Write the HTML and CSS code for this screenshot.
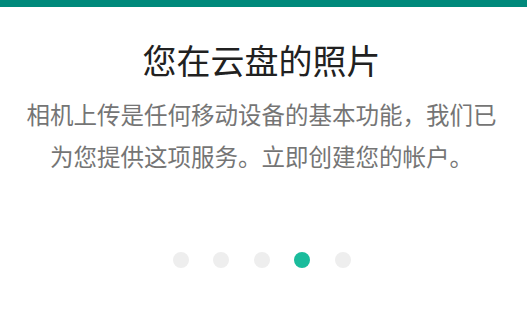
FILE: index.html
```html
<!DOCTYPE html>
<html lang="zh-CN">
<head>
<meta charset="utf-8">
<link rel="stylesheet" href="styles.css">
</head>
<body>
<div class="topbar"></div>
<main class="page">
  <h1 class="title">您在云盘的照片</h1>
  <p class="desc">相机上传是任何移动设备的基本功能，我们已为您提供这项服务。立即创建您的帐户。</p>
  <div class="dots">
    <span class="dot"></span>
    <span class="dot"></span>
    <span class="dot"></span>
    <span class="dot active"></span>
    <span class="dot"></span>
  </div>
</main>
</body>
</html>
```
FILE: styles.css
```css
html, body {
  margin: 0;
  padding: 0;
  background: #ffffff;
}
body {
  font-family: "Noto Sans CJK SC", "Noto Sans", sans-serif;
  width: 527px;
  height: 317px;
  overflow: hidden;
}
.topbar {
  height: 7px;
  background: #00897b;
}
.page {
  width: 523px;
  display: flex;
  flex-direction: column;
  align-items: center;
}
.title {
  margin: 33px 0 0;
  font-size: 34px;
  line-height: 40px;
  font-weight: 400;
  color: #212121;
}
.desc {
  margin: 13px 0 0;
  padding: 0 18px;
  box-sizing: border-box;
  width: 100%;
  font-size: 23.5px;
  line-height: 42px;
  color: #757575;
  text-align: center;
}
.dots {
  margin-top: 75px;
  display: flex;
  gap: 24.5px;
}
.dot {
  width: 16px;
  height: 16px;
  border-radius: 50%;
  background: #eeeeee;
}
.dot.active {
  background: #1abc9c;
}
```
